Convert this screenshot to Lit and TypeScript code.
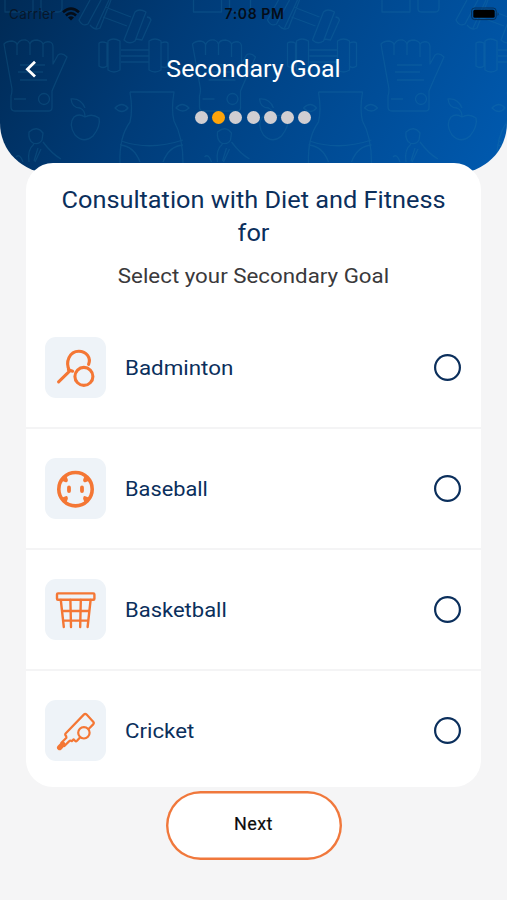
import { LitElement, html, css, svg } from "lit";
import { customElement, property, state } from "lit/decorators.js";

const icons: Record<string, unknown> = {
  Badminton: svg`
    <path stroke-width="3.1" d="M5.6 33.8 16.6 23.2M15.4 21.8 19.6 23.2M16.4 22.4C12 14 16.6 3.2 25.8 3.2C33.6 3.2 38.2 10 35.6 16.4"/>
    <circle stroke-width="3.1" cx="30.9" cy="28.4" r="9"/>`,
  Baseball: svg`
    <circle cx="22.5" cy="20.2" r="16.7" stroke-width="3.6"/>
    <path stroke-width="3.8" d="M16 18.4v3.6M29 18.4v3.6"/>
    <path stroke-width="3" d="M9.9 10.6 13.2 11.8M12.3 8.2 13.4 11M35.1 10.6 31.8 11.8M32.7 8.2 31.6 11M9.9 29.8 13.2 28.6M12.3 32.2 13.4 29.4M35.1 29.8 31.8 28.6M32.7 32.2 31.6 29.4"/>`,
  Basketball: svg`
    <g stroke-width="2.4"><rect x="4" y="3.4" width="37.4" height="6.4" rx="1"/>
    <path d="M7.8 10 10.8 37M17.4 10 18 37M27.8 10 27.2 37M37.6 10 34.6 37M9.2 21h27M10.5 30.6h24.6"/></g>`,
  Cricket: svg`
    <g stroke-width="2.2"><path d="M35.6 18 40.2 13.4Q41.4 12.2 40.2 10.8L33.6 3.6Q32.2 2.2 30.8 3.6L12.6 22.4Q11.6 23.6 13.2 25.2L13.4 26.8 8.4 31.8M27 26.4 24 29.8Q23 30.8 22 29.8L20.6 28.4 18.8 30.2Q17.2 29 16 30.4L11.4 35"/>
    <circle cx="30.9" cy="21.8" r="5.7"/></g>
    <path stroke-width="5.2" d="M6.6 36.6 9.8 33.2"/>`,
};

@customElement("goal-row")
export class GoalRow extends LitElement {
  @property() name = "";
  @property({ type: Boolean }) chosen = false;

  static styles = css`
    :host { display: flex; align-items: center; box-sizing: border-box; height: 121px; padding: 0 20px 0 19px; border-bottom: 2px solid #f4f4f5; }
    .tile { width: 61px; height: 61px; border-radius: 11px; background: #eef3f8; display: grid; place-items: center; }
    .tile svg { width: 46px; height: 40px; fill: none; stroke: #f47735; stroke-width: 2.8; stroke-linecap: round; stroke-linejoin: round; }
    .name { flex: 1; margin-left: 19px; font-size: 21px; line-height: 28px; color: #0b2f5c; transform: scaleX(var(--stretch, 1.05)); transform-origin: left; white-space: nowrap; }
    .radio { width: 27px; height: 27px; box-shadow: inset 0 0 0 2.2px #0b2f5c; border-radius: 50%; }
    .radio.on { background: #0b2f5c; }
  `;

  render() {
    return html`
      <div class="tile"><svg viewBox="0 0 46 40">${icons[this.name]}</svg></div>
      <span class="name">${this.name}</span>
      <span class="radio ${this.chosen ? "on" : ""}"></span>`;
  }
}

const motif = svg`
  <path d="M5 0v12h28V0M41 0v9q0 3 4 3h13q4 0 4-4V0"/>
  <path d="M4 44q3-3 8-3 5 1 5 4 2-6 9-5 3 1 4 4 1-4 7-4 5 1 6 4 2-3 7-2 3 1 3 5v17l5-9q4-3 9 2l-9 20-6 14v17q0 3-4 3H15q-4 0-4-4V96q1-3 1-7L5 50z
    M17 45v10M30 44v11M43 44v13M20 65h25M18 72h25M20 80h27M14 99h12"/><circle cx="44" cy="99" r="5.5"/>
  <path d="M99 43q3-2 8 0v23q-4 3-8 0zM108 41q5-4 12 0v29q-6 4-12 0zM121 50h28v12h-28M121 56h28M149 41q6-4 12 0v29q-6 4-12 0zM161 43q5-2 7 0v23q-4 3-7 0"/>
  <path d="M90 0 79 20q3 7 9 4L101 0M96 28 109 0M90 25q5 6 10 3L111 0M105 7l26 10M103 17l24 9M135 12q4-4 11 0l-11 29q-6 4-11-1zM147 17q3 0 4 3l-9 20-6-1"/>
  <path d="M85 117q-6-4-11 0-6 7 1 18 9 9 18 1 8-10 6-18-7-5-14-1zM85 117q0-7-5-9-8 0-9-9 10-1 14 9"/>
  <path d="M130 92h44q-3 18 0 29 9 16 9 42M130 92q3 18 0 30-11 15-10 41M121 141q29 10 62-1M120 145q14 1 20 17M183 145q-14 1-20 17M115 108q7-7 13 0-6 7-13 0zM176 108q6-7 13 0-6 6-13 0z"/>
  <path d="M29 132q8-7 14 1l-1 7q-3 5-9 3-5-3-4-11zM34 144q-7 6-5 18M43 142q9 12 18 17M38 148l-4 13M41 149l-6 13M16 157q4-4 7 5"/>`;

@customElement("app-root")
export class AppRoot extends LitElement {
  @state() private chosen = "";
  private goals = [
    { name: "Badminton", stretch: 1.064 },
    { name: "Baseball", stretch: 1.037 },
    { name: "Basketball", stretch: 1.047 },
    { name: "Cricket", stretch: 1.06 },
  ];

  static styles = css`
    :host { display: block; height: 900px; overflow: hidden; background: #f5f5f6; font-family: Roboto, "Liberation Sans", sans-serif; }
    .page { display: flex; flex-direction: column; align-items: center; }
    .top { position: relative; box-sizing: border-box; width: 100%; height: 173px; border-radius: 0 0 50px 50px; overflow: hidden; color: #fff;
      background: linear-gradient(120deg, #002a55 0%, #003b77 32%, #00468b 55%, #005ab0 100%); }
    .pattern { position: absolute; inset: 0; width: 507px; height: 173px; fill: none; stroke: #2583ad; stroke-opacity: .22; stroke-width: 1.3; stroke-linejoin: round; }
    .status, .nav, .dots { position: relative; }
    .status { display: grid; grid-template-columns: 1fr auto 1fr; align-items: center; height: 27px; padding: 0 7px 0 9px; color: #050d18; font: 13.5px Inter, sans-serif; }
    .carrier { display: flex; align-items: center; gap: 6px; color: #07172b; letter-spacing: .35px; }
    .carrier svg { width: 18px; height: 14px; }
    .time { font-weight: 600; font-size: 14px; letter-spacing: .6px; }
    .battery { justify-self: end; width: 29px; height: 14px; }
    .nav { display: grid; grid-template-columns: 60px 1fr 60px; align-items: center; height: 84px; }
    .back { width: 12px; height: 18px; margin-left: 25px; }
    .title { text-align: center; font-size: 24px; transform: scaleX(1.04); }
    .dots { display: flex; justify-content: center; gap: 4.15px; padding-right: 1px; }
    .dot { width: 13px; height: 13px; border-radius: 50%; background: #d0ced2; }
    .dot.now { background: #ffa50a; }
    .card { position: relative; box-sizing: border-box; width: 455px; height: 624px; margin-top: -10px; border-radius: 27px; overflow: hidden; background: #fff; }
    .intro { box-sizing: border-box; height: 145px; padding-top: 21px; text-align: center; }
    .plan { font-size: 24px; line-height: 33px; transform: scaleX(1.055); color: #0b2f5c; }
    .ask { margin-top: 10px; font-size: 21px; line-height: 33px; transform: scaleX(1.0627); color: #3a393b; }
    .next { width: 176px; height: 69px; margin-top: 4px; padding: 0 0 5px; border: 0; box-shadow: inset 0 0 0 2.4px #f0783c; border-radius: 35px; background: #fff; color: #0c0c0c; font: 18px Roboto, sans-serif; -webkit-text-stroke: .2px; letter-spacing: .4px; }
  `;

  render() {
    return html`
      <div class="page">
        <header class="top">
          <svg class="pattern" viewBox="0 0 507 173">
            ${[0, 188.5, 377].map((x) => svg`<g transform="translate(${x} 0)">${motif}</g>`)}
          </svg>
          <div class="status">
            <span class="carrier"><span>Carrier</span>
              <svg viewBox="0 0 18 14" fill="none" stroke="#050d18" stroke-width="2.6"><path d="M1 5.2Q9-2 17 5.2M3.9 8.4Q9 4 14.1 8.4"/><path d="M6 10.6Q9 8 12 10.6L9 13.5z" fill="#050d18" stroke="none"/></svg>
            </span>
            <span class="time">7:08 PM</span>
            <svg class="battery" viewBox="0 0 29 14"><rect x=".6" y="1" width="24.6" height="11.6" rx="3" fill="none" stroke="#06305a" stroke-width="1"/><rect x="2.3" y="2.8" width="21.4" height="8" rx="1.6"/><path d="M26.6 5v4q2-2 0-4z" fill="#06305a"/></svg>
          </div>
          <div class="nav">
            <svg class="back" viewBox="0 0 12 18" fill="none" stroke="#fff" stroke-width="2.8"><path d="M10 1.8 2.4 9.2 10 16.6"/></svg>
            <span class="title">Secondary Goal</span>
          </div>
          <div class="dots">${[0, 1, 2, 3, 4, 5, 6].map((i) => html`<span class="dot ${i === 1 ? "now" : ""}"></span>`)}</div>
        </header>
        <main class="card">
          <div class="intro">
            <div class="plan">Consultation with Diet and Fitness<br />for</div>
            <div class="ask">Select your Secondary Goal</div>
          </div>
          ${this.goals.map((g) => html`<goal-row .name=${g.name} .chosen=${this.chosen === g.name} style="--stretch:${g.stretch}" @click=${() => (this.chosen = g.name)}></goal-row>`)}
        </main>
        <button class="next">Next</button>
      </div>`;
  }
}
